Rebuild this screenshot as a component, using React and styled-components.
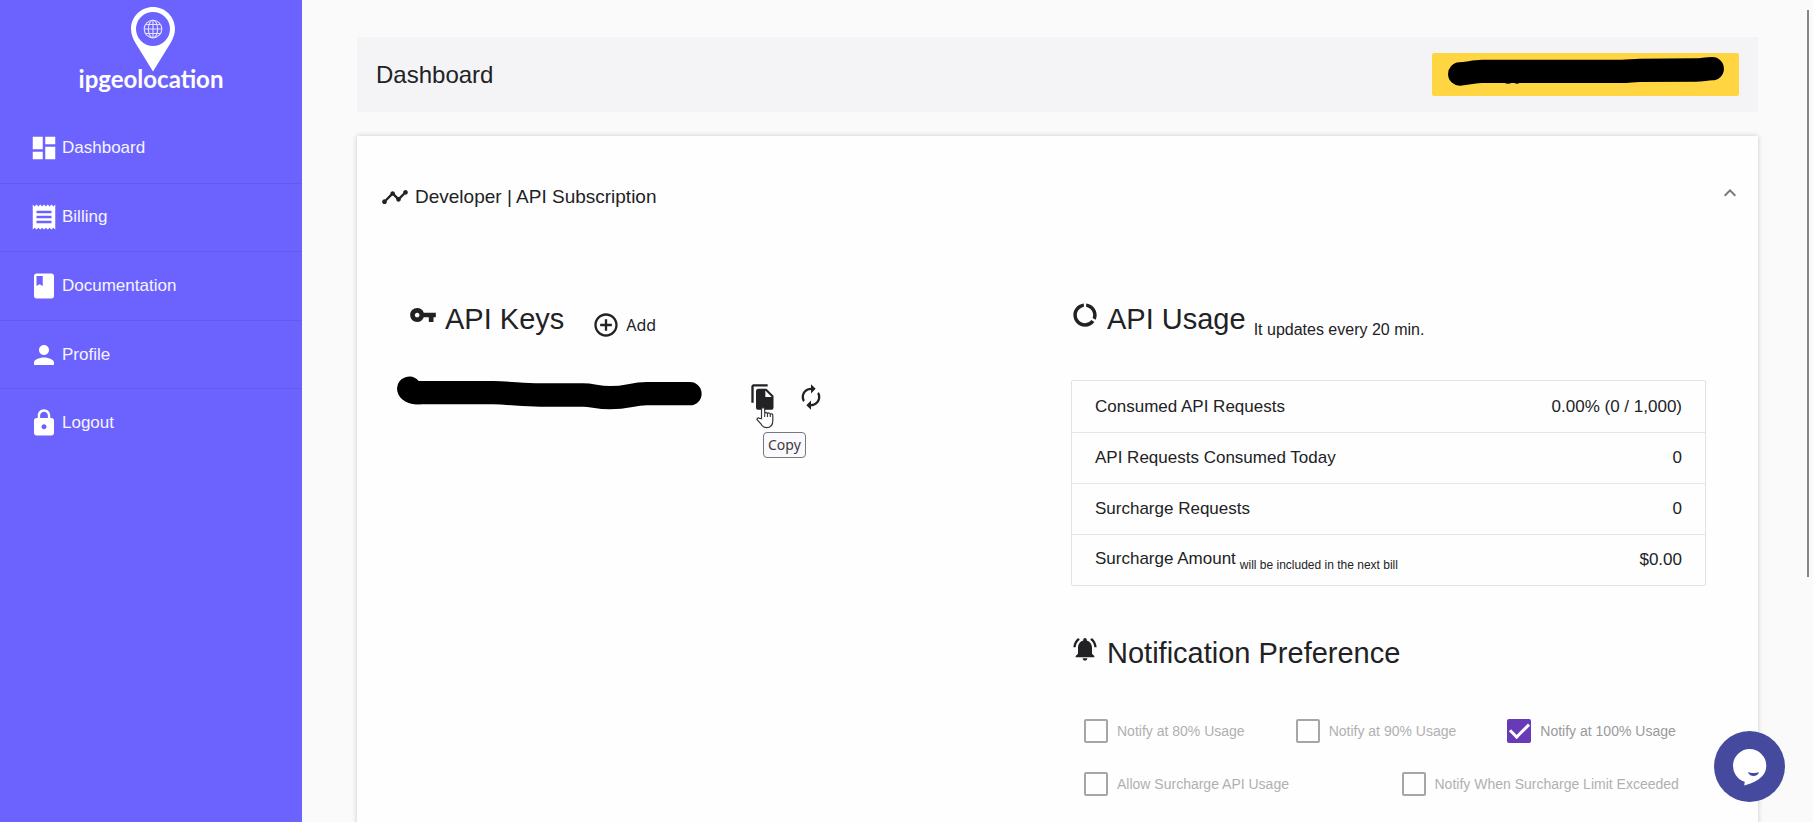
import React, { useState } from "react";
import styled, { createGlobalStyle } from "styled-components";
import {
  MdDashboard, MdReceipt, MdBook, MdPerson, MdLock, MdTimeline, MdVpnKey,
  MdAddCircleOutline, MdFileCopy, MdAutorenew, MdDataUsage,
  MdNotificationsActive, MdExpandLess,
} from "react-icons/md";

const GlobalStyle = createGlobalStyle`
  * { box-sizing: border-box; }
  body {
    margin: 0;
    background: #fafafa;
    color: #222225;
    font-family: "Liberation Sans", Arial, sans-serif;
    font-size: 17px;
  }
  button { font: inherit; color: inherit; border: 0; padding: 0; background: none; cursor: pointer; }
  svg { display: block; flex: none; }
`;

const Shell = styled.div`
  display: flex;
  height: 100vh;
  overflow: hidden;
`;

const Sidebar = styled.aside`
  flex: none;
  width: 302px;
  background: #6c63ff;
  color: #fff;
`;

const Brand = styled.a`
  display: flex;
  flex-direction: column;
  align-items: center;
  height: 114px;
  padding: 7px 0 0 4px;
  color: #fff;
  text-decoration: none;
`;

const BrandName = styled.span`
  margin: -7px 4px 0 0;
  font: 700 24px/28px Lato, sans-serif;
`;

const Nav = styled.nav`
  display: grid;
  grid-auto-rows: 1fr;
  height: 343px;
`;

const NavLink = styled.a`
  display: flex;
  align-items: center;
  gap: 3px;
  padding-left: 29px;
  color: #f6f5ff;
  text-decoration: none;
  & + & { border-top: 1px solid #6259ee; }
  svg { color: #fff; }
`;

const Main = styled.main`
  flex: 1;
  min-width: 0;
  padding: 37px 55px 0;
`;

const TopBar = styled.header`
  display: flex;
  align-items: center;
  justify-content: space-between;
  height: 75px;
  padding: 0 19px;
  background: #f4f4f7;
`;

const PageTitle = styled.h1`
  margin: 0;
  font-size: 24px;
  font-weight: 400;
  line-height: 28px;
`;

const AccountButton = styled.button`
  width: 307px;
  height: 43px;
  border-radius: 2px;
  background: #ffd542;
`;

const Card = styled.section`
  min-height: 100vh;
  margin-top: 24px;
  background: #fefefe;
  box-shadow: 0 0 5px rgba(0, 0, 0, 0.2);
`;

const PanelHeader = styled.button`
  display: flex;
  align-items: center;
  gap: 6px;
  width: 100%;
  height: 122px;
  padding: 0 16px 0 24px;
  font-size: 19px;
`;

const PanelTitle = styled.span`
  flex: 1;
  text-align: left;
`;

const Chevron = styled(MdExpandLess)`
  margin-bottom: 8px;
  color: #77777a;
`;

const Columns = styled.div`
  display: grid;
  grid-template-columns: 1fr 1fr;
  padding: 39px 39px 0 40px;
`;

const Column = styled.div`
  padding: 0 ${(p) => (p.$inset ? "13px" : "0")};
`;

const HeadingRow = styled.div`
  display: flex;
  align-items: baseline;
  gap: 8px;
  height: 47px;
  padding-left: ${(p) => (p.$inset ? "12px" : "0")};
`;

const Heading = styled.h2`
  display: flex;
  align-items: baseline;
  gap: 8px;
  margin: 0;
  font-size: 29px;
  font-weight: 400;
  line-height: 44px;
`;

const HeadingNote = styled.sub`
  font-size: 16px;
  line-height: 28px;
  align-self: flex-end;
`;

const AddButton = styled.button`
  display: flex;
  align-items: center;
  align-self: flex-end;
  gap: 6px;
  margin-left: 20px;
  padding-bottom: 5px;
  font: 16px/28px "Noto Sans", sans-serif;
`;

const KeyRow = styled.div`
  display: flex;
  align-items: flex-start;
  margin-top: 32px;
`;

const KeyActions = styled.div`
  position: relative;
  display: flex;
  gap: 20px;
  margin: 7px 0 0 47px;
`;

const Pointer = styled.svg`
  position: absolute;
  left: 7px;
  top: 24px;
`;

const Tooltip = styled.span`
  position: absolute;
  left: 14px;
  top: 49px;
  padding: 0 4px;
  border: 1px solid #77777c;
  border-radius: 4px;
  background: #f9f9fe;
  color: #3c3c40;
  font: 14px/24px "Noto Sans", sans-serif;
`;

const UsageTable = styled.table`
  width: 100%;
  margin-top: 36px;
  border: 1px solid #e2e2e4;
  border-radius: 2px;
  border-spacing: 0;
  th, td {
    height: 51px;
    padding: 0 23px;
    font-weight: 400;
    text-align: left;
  }
  td { text-align: right; }
  tr + tr th, tr + tr td { border-top: 1px solid #e6e6e8; }
  sub {
    margin-left: 4px;
    font-size: 12px;
    line-height: 12px;
  }
`;

const Preferences = styled.section`
  padding-top: 45px;
`;

const OptionRow = styled.div`
  display: grid;
  grid-auto-flow: column;
  grid-auto-columns: 1fr;
  margin-top: ${(p) => (p.$first ? "41px" : "29px")};
`;

const Option = styled.label`
  display: flex;
  align-items: center;
  gap: 9px;
  height: 24px;
  padding-left: 13px;
  color: ${(p) => (p.$on ? "#9a9a9c" : "#b0b0b2")};
  font-size: 14px;
  white-space: nowrap;
`;

const Tick = styled.input`
  appearance: none;
  display: grid;
  place-items: center;
  flex: none;
  width: 24px;
  height: 24px;
  margin: 0;
  border: 2px solid #a6a6a8;
  border-radius: 2px;
  &:checked { border-color: #673ab7; background: #673ab7; }
  &:checked::before {
    content: "";
    width: 16px;
    height: 8px;
    margin-top: -5px;
    border: solid #fff;
    border-width: 0 0 3px 3px;
    transform: rotate(-45deg);
  }
`;

const ChatButton = styled.button`
  position: fixed;
  right: 28px;
  bottom: 20px;
  width: 71px;
  height: 71px;
  border-radius: 50%;
  background: #454a9f;
  display: grid;
  place-items: center;
`;

const ScrollThumb = styled.div`
  position: fixed;
  top: 10px;
  right: 4px;
  width: 2px;
  height: 69vh;
  background: #858587;
`;

const navItems = [
  ["Dashboard", MdDashboard],
  ["Billing", MdReceipt],
  ["Documentation", MdBook],
  ["Profile", MdPerson],
  ["Logout", MdLock],
];

const usage = [
  ["Consumed API Requests", "0.00% (0 / 1,000)"],
  ["API Requests Consumed Today", "0"],
  ["Surcharge Requests", "0"],
  ["Surcharge Amount", "$0.00", "will be included in the next bill"],
];

const optionRows = [
  [["Notify at 80% Usage", false], ["Notify at 90% Usage", false], ["Notify at 100% Usage", true]],
  [["Allow Surcharge API Usage", false], ["Notify When Surcharge Limit Exceeded", false]],
];

function PinLogo() {
  return (
    <svg width="44" height="65" viewBox="0 0 44 65" aria-hidden="true">
      <path
        fill="#fff"
        fillRule="evenodd"
        d="M22 0C10 0 0 9.700 0 21.800c0 5 1.600 9.200 4 13.400L22 64.500l18-29.300c2.400-4.200 4-8.400 4-13.400C44 9.700 34 0 22 0zm0 5a17 17 0 1 1 0 34 17 17 0 0 1 0-34z"
      />
      <g fill="none" stroke="#e4e2ff" strokeWidth="1.100">
        <circle cx="22" cy="22" r="8.800" />
        <ellipse cx="22" cy="22" rx="4.600" ry="8.800" />
        <path d="M22 13v18M13 22h18M14.500 17.500h15M14.500 26.500h15" />
      </g>
    </svg>
  );
}

function Scribble({ width, height, d, children }) {
  return (
    <svg width={width} height={height} viewBox={`0 0 ${width} ${height}`} aria-hidden="true">
      <path d={d} fill="none" stroke="#000" strokeWidth="23.300" strokeLinecap="round" strokeLinejoin="round" />
      {children}
    </svg>
  );
}

function HandPointer() {
  return (
    <Pointer width="18" height="22" viewBox="0 0 18 22" aria-hidden="true">
      <path
        d="M5.500 11.500V2.300a1.600 1.600 0 0 1 3.200 0v4.200a1.500 1.500 0 0 1 2.800.2 1.500 1.500 0 0 1 2.800.6 1.400 1.400 0 0 1 2.500.9v5.300c0 4.600-2.500 7.200-6.200 7.200-3.300 0-4.800-1.700-5.900-4.100L1.200 13c-.8-1.600.9-2.700 2.200-1.700z"
        fill="#fff"
        stroke="#333338"
        strokeWidth="1.200"
      />
      <path d="M8.700 6.500v3.500M11.500 7v3M14.300 7.500V10" stroke="#333338" strokeWidth="1.100" />
    </Pointer>
  );
}

export default function App() {
  const [open, setOpen] = useState(true);
  return (
    <Shell>
      <GlobalStyle />
      <Sidebar>
        <Brand href="#home">
          <PinLogo />
          <BrandName>ipgeolocation</BrandName>
        </Brand>
        <Nav>
          {navItems.map(([label, Icon]) => (
            <NavLink key={label} href={`#${label.toLowerCase()}`}>
              <Icon size={30} />
              {label}
            </NavLink>
          ))}
        </Nav>
      </Sidebar>
      <Main>
        <TopBar>
          <PageTitle>Dashboard</PageTitle>
          <AccountButton aria-label="Account">
            <Scribble width={307} height={43} d="M27.700 21C36 20.700 42 18.300 50 18.300H190C196 18.300 202 17.300 208 17.300L264 17C270 17 274 15.700 280.300 15.700">
              <path d="M72 29.500q4 2.500 8 0M82 29.500q3 2.500 6 0" />
            </Scribble>
          </AccountButton>
        </TopBar>
        <Card>
          <PanelHeader aria-expanded={open} onClick={() => setOpen(!open)}>
            <MdTimeline size={28} />
            <PanelTitle>Developer | API Subscription</PanelTitle>
            <Chevron size={24} />
          </PanelHeader>
          {open && (
            <Columns>
              <Column>
                <HeadingRow $inset>
                  <Heading><MdVpnKey size={28} />API Keys</Heading>
                  <AddButton><MdAddCircleOutline size={28} />Add</AddButton>
                </HeadingRow>
                <KeyRow>
                  <Scribble width={305} height={34} d="M19.700 16.700H96C115 17 125 19 143 19H186C196 19 200 21.700 213 21.700C232 21.700 234 17.700 250 17.700H293">
                    <path d="M0 12.300A12.300 12.300 0 0 1 21.700 5L24 28.300H19.700C8 28.300 0 21 0 12.300z" />
                  </Scribble>
                  <KeyActions>
                    <button aria-label="Copy"><MdFileCopy size={28} /></button>
                    <button aria-label="Renew"><MdAutorenew size={28} /></button>
                    <HandPointer />
                    <Tooltip role="tooltip">Copy</Tooltip>
                  </KeyActions>
                </KeyRow>
              </Column>
              <Column $inset>
                <HeadingRow>
                  <Heading><MdDataUsage size={28} />API Usage</Heading>
                  <HeadingNote>It updates every 20 min.</HeadingNote>
                </HeadingRow>
                <UsageTable>
                  <tbody>
                    {usage.map(([label, value, note]) => (
                      <tr key={label}>
                        <th scope="row">{label}{note && <sub>{note}</sub>}</th>
                        <td>{value}</td>
                      </tr>
                    ))}
                  </tbody>
                </UsageTable>
                <Preferences>
                  <HeadingRow>
                    <Heading><MdNotificationsActive size={28} />Notification Preference</Heading>
                  </HeadingRow>
                  {optionRows.map((row, i) => (
                    <OptionRow key={i} $first={i === 0}>
                      {row.map(([label, on]) => (
                        <Option key={label} $on={on}>
                          <Tick type="checkbox" defaultChecked={on} disabled />
                          {label}
                        </Option>
                      ))}
                    </OptionRow>
                  ))}
                </Preferences>
              </Column>
            </Columns>
          )}
        </Card>
      </Main>
      <ChatButton aria-label="Chat">
        <svg width="35" height="38" viewBox="0 0 35 38" aria-hidden="true">
          <path d="M17.500 1a16.800 16.800 0 0 1 16.800 16.800c0 8-5.800 15.700-22 19.700l.4-3.700A16.800 16.800 0 0 1 17.500 1z" fill="#fff" />
          <path d="M16 24c3 1.400 8 1.400 11 0-1 5.200-10 5.200-11 0z" fill="#454a9f" />
        </svg>
      </ChatButton>
      <ScrollThumb />
    </Shell>
  );
}
